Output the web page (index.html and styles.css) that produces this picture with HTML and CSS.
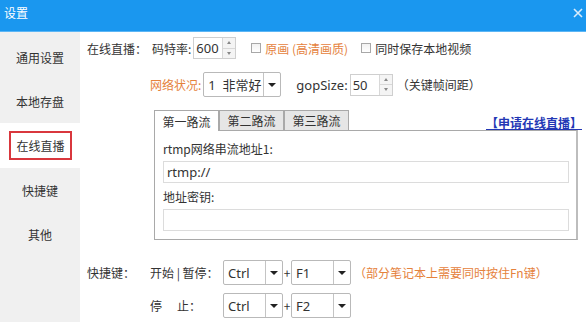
FILE: index.html
```html
<!DOCTYPE html>
<html lang="zh-CN">
<head>
    <meta charset="UTF-8">
    <title>设置</title>
    <link rel="stylesheet" href="styles.css">
</head>
<body>
    <div class="window">
        <div class="titlebar">
            <span class="title">设置</span>
            <svg class="close" width="10" height="10" viewBox="0 0 10 10">
                <path d="M1 1 L9 9 M9 1 L1 9" stroke="#d8ecfc" stroke-width="1.6" fill="none"/>
            </svg>
        </div>
        <div class="body">
            <ul class="sidebar">
                <li>通用设置</li>
                <li>本地存盘</li>
                <li class="active"><span>在线直播</span></li>
                <li>快捷键</li>
                <li>其他</li>
            </ul>
            <div class="main">
                <div class="row row-rate">
                    <span class="label">在线直播：</span>
                    <span class="field-label">码特率:</span>
                    <div class="spin spin-rate">
                        <span class="spin-value">600</span>
                        <span class="spin-btns"><i class="up"></i><i class="down"></i></span>
                    </div>
                    <label class="check orange"><span class="box"></span>原画 (高清画质)</label>
                    <label class="check"><span class="box"></span>同时保存本地视频</label>
                </div>

                <div class="row row-net">
                    <span class="label"></span>
                    <span class="orange">网络状况:</span>
                    <div class="select select-net">
                        <span class="select-value">1&nbsp; 非常好</span>
                        <span class="select-btn"><i></i></span>
                    </div>
                    <span class="field-label gop">gopSize:</span>
                    <div class="spin spin-gop">
                        <span class="spin-value">50</span>
                        <span class="spin-btns"><i class="up"></i><i class="down"></i></span>
                    </div>
                    <span class="hint">（关键帧间距）</span>
                </div>

                <div class="stream">
                    <div class="tabbar">
                        <span class="tab active">第一路流</span>
                        <span class="tab">第二路流</span>
                        <span class="tab">第三路流</span>
                        <a class="apply" href="#">【申请在线直播】</a>
                    </div>
                    <div class="panel">
                        <div class="panel-label">rtmp网络串流地址1:</div>
                        <div class="text-input">rtmp://</div>
                        <div class="panel-label second">地址密钥:</div>
                        <div class="text-input"></div>
                    </div>
                </div>

                <div class="row row-key">
                    <span class="label">快捷键：</span>
                    <span class="key-label">开始 | 暂停：</span>
                    <div class="select select-key">
                        <span class="select-value">Ctrl</span>
                        <span class="select-btn"><i></i></span>
                    </div>
                    <span class="plus">+</span>
                    <div class="select select-key">
                        <span class="select-value">F1</span>
                        <span class="select-btn"><i></i></span>
                    </div>
                    <span class="orange note">（部分笔记本上需要同时按住Fn键）</span>
                </div>

                <div class="row row-key second">
                    <span class="label"></span>
                    <span class="key-label">停<span class="gap"></span>止：</span>
                    <div class="select select-key">
                        <span class="select-value">Ctrl</span>
                        <span class="select-btn"><i></i></span>
                    </div>
                    <span class="plus">+</span>
                    <div class="select select-key">
                        <span class="select-value">F2</span>
                        <span class="select-btn"><i></i></span>
                    </div>
                </div>
            </div>
        </div>
    </div>
</body>
</html>
```

FILE: styles.css
```css
* {
    margin: 0;
    padding: 0;
    box-sizing: border-box;
}

body {
    font-family: "Noto Sans CJK SC", "Noto Sans", sans-serif;
    font-size: 12px;
    color: #333;
    background: #fff;
    width: 586px;
    height: 322px;
    overflow: hidden;
}

.window {
    display: flex;
    flex-direction: column;
    height: 322px;
}

.titlebar {
    height: 32px;
    background: #1a97ef;
    border-bottom: 1px solid #5cb6f5;
    display: flex;
    align-items: center;
    justify-content: space-between;
    padding: 0 3px 6px 4px;
    color: #fff;
}

.titlebar .title {
    font-size: 12px;
}

.body {
    flex: 1;
    display: flex;
}

/* left menu */
.sidebar {
    list-style: none;
    width: 80px;
    background: #f0f0f0;
    padding-top: 3px;
}

.sidebar li {
    height: 44px;
    display: flex;
    align-items: center;
    justify-content: center;
    color: #333;
}

.sidebar li.active {
    background: #fff;
    height: 45px;
}

.sidebar li.active span {
    width: 63px;
    height: 29px;
    border: 2px solid #d9373d;
    display: flex;
    align-items: center;
    justify-content: center;
    margin-left: 1px;
}

/* main settings */
.main {
    flex: 1;
    padding: 5px 8px 0 7px;
}

.row {
    display: flex;
    align-items: center;
    white-space: nowrap;
}

.row .label {
    width: 63px;
    flex-shrink: 0;
}

.orange {
    color: #e5823c;
}

.row-rate {
    height: 22px;
}

.row-rate .field-label {
    margin-left: 2px;
    margin-right: 2px;
}

.spin {
    display: flex;
    height: 22px;
    border: 1px solid #cfcfcf;
    background: #fff;
}

.spin-value {
    display: flex;
    align-items: center;
    padding-left: 2px;
    font-family: "Noto Sans", sans-serif;
    font-size: 13px;
}

.spin-rate .spin-value {
    width: 28px;
}

.spin-gop .spin-value {
    width: 28px;
}

.spin-btns {
    width: 13px;
    display: flex;
    flex-direction: column;
    border-left: 1px solid #d8d8d8;
}

.spin-btns i {
    flex: 1;
    display: flex;
    align-items: center;
    justify-content: center;
    background: #f4f4f4;
}

.spin-btns i + i {
    border-top: 1px solid #d8d8d8;
}

.spin-btns i::after {
    content: "";
    border-left: 2.5px solid transparent;
    border-right: 2.5px solid transparent;
}

.spin-btns .up::after {
    border-bottom: 3px solid #888;
}

.spin-btns .down::after {
    border-top: 3px solid #888;
}

.check {
    display: flex;
    align-items: center;
    margin-left: 15px;
}

.check + .check {
    margin-left: 13px;
}

.check .box {
    width: 10px;
    height: 10px;
    border: 1px solid #a8a8a8;
    background: linear-gradient(#f2f2f2, #fff);
    margin-right: 4px;
}

.row-net {
    height: 25px;
    margin-top: 13px;
}

.select {
    display: flex;
    height: 25px;
    border: 1px solid #b9b9b9;
    border-radius: 2px;
    background: #fff;
}

.select-value {
    display: flex;
    align-items: center;
    padding-left: 4px;
    font-family: "Noto Sans", "Noto Sans CJK SC", sans-serif;
    font-size: 13px;
}

.select-btn {
    width: 17px;
    display: flex;
    align-items: center;
    justify-content: center;
    border-left: 1px solid #c4c4c4;
}

.select-btn i {
    border-left: 4px solid transparent;
    border-right: 4px solid transparent;
    border-top: 4px solid #222;
}

.select-net {
    margin-left: 2px;
}

.select-net .select-value {
    width: 59px;
    font-size: 13px;
}

.gop {
    font-family: "Noto Sans", sans-serif;
    font-size: 13px;
    margin-left: 15px;
    margin-right: 2px;
}

.hint {
    margin-left: 4px;
}

/* stream tabs */
.stream {
    margin-top: 13px;
    margin-left: 67px;
}

.tabbar {
    display: flex;
    align-items: flex-end;
    height: 20px;
}

.tab {
    width: 65px;
    height: 20px;
    display: flex;
    align-items: center;
    justify-content: center;
    border: 1px solid #a9a9a9;
    border-bottom: none;
    background: #e6e6e6;
}

.tab.active {
    background: #fff;
    height: 21px;
    margin-bottom: -1px;
    position: relative;
}

.apply {
    margin-left: auto;
    margin-right: -4px;
    color: #2337b5;
    text-decoration: underline;
    font-weight: 600;
    line-height: 16px;
    margin-bottom: -1px;
}

.panel {
    border: 1px solid #a9a9a9;
    border-right: 2px solid #bdbdbd;
    height: 110px;
    padding: 9px 7px 0 8px;
}

.panel-label {
    height: 18px;
    line-height: 18px;
}

.panel-label.second {
    margin-top: 5px;
}

.text-input {
    margin-top: 3px;
    height: 22px;
    border: 1px solid #dcdcdc;
    padding-left: 3px;
    display: flex;
    align-items: center;
    font-family: "Noto Sans", sans-serif;
    font-size: 13px;
}

/* hotkeys */
.row-key {
    height: 25px;
    margin-top: 20px;
}

.row-key.second {
    margin-top: 8px;
}

.key-label {
    width: 73px;
    display: flex;
}

.key-label .gap {
    width: 15px;
}

.select-key .select-value {
    width: 41px;
}

.plus {
    width: 8px;
    text-align: center;
}

.note {
    margin-left: 3px;
}
```
